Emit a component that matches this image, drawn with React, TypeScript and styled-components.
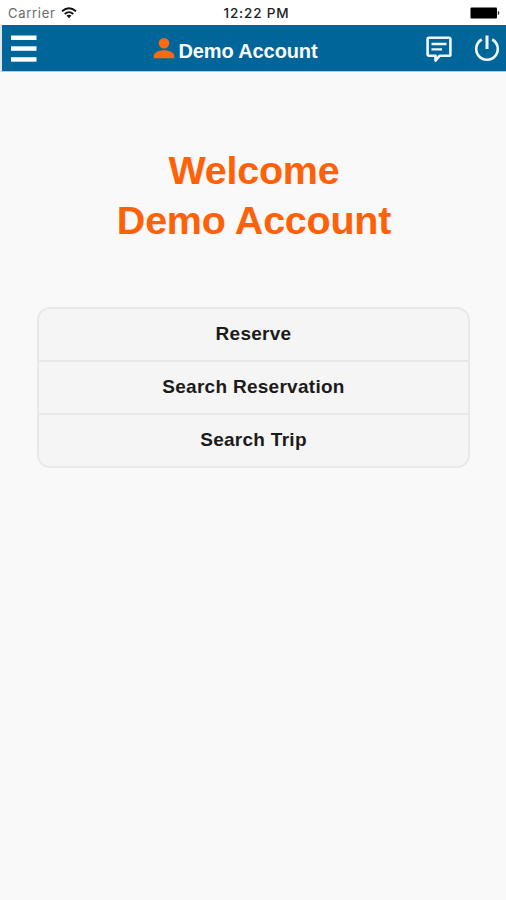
import React from "react";
import styled, { createGlobalStyle } from "styled-components";

const GlobalStyle = createGlobalStyle`
  * { box-sizing: border-box; }
  body { margin: 0; background: #f9f9f9; font-family: "Liberation Sans", Arial, sans-serif; }
`;

const Screen = styled.div`
  display: flex;
  flex-direction: column;
  height: 900px;
  background: #f9f9f9;
`;

const StatusBar = styled.div`
  display: grid;
  grid-template-columns: 1fr auto 1fr;
  align-items: center;
  height: 25px;
  padding: 1px 6px 0 8px;
  background: #fff;
  font-family: Inter, sans-serif;
  font-size: 13px;
  color: #222;
`;

const Carrier = styled.div`
  display: flex;
  align-items: center;
  gap: 5px;
  color: #6a6a6a;
  letter-spacing: 0.7px;
`;

const Clock = styled.span`
  font-weight: 500;
  font-size: 13.5px;
  letter-spacing: 0.85px;
  margin-left: 5px;
`;

const Battery = styled.svg`
  justify-self: end;
`;

const Header = styled.header`
  display: grid;
  grid-template-columns: 59px 1fr 98px;
  align-items: center;
  height: 47px;
  padding: 0 6px 0 7px;
  background: #006699;
  border-left: 2px solid #dfe6ee;
  border-bottom: 1px solid #b5c9d9;
`;

const IconButton = styled.button`
  display: flex;
  padding: 0;
  border: 0;
  background: none;
  color: #f1f8ff;
`;

const Title = styled.div`
  display: flex;
  align-items: center;
  justify-content: center;
  gap: 4px;
  color: #f8fbff;
  font-size: 20px;
  font-weight: bold;
  line-height: 24px;
`;

const TitleText = styled.span`
  padding-top: 5px;
  letter-spacing: -0.12px;
`;

const Actions = styled.div`
  display: flex;
  align-items: center;
  justify-content: flex-end;
  gap: 21px;
`;

const Welcome = styled.h1`
  margin: 73px 0 0;
  padding-left: 2px;
  text-align: center;
  color: #ff6108;
  font-size: 39.5px;
  line-height: 50px;
  letter-spacing: -0.25px;
`;

const Menu = styled.nav`
  display: flex;
  flex-direction: column;
  margin: 62px 36px 0 37px;
  border: 2px solid #e8e8e8;
  border-radius: 13px;
  background: #f5f5f5;
  overflow: hidden;
`;

const MenuItem = styled.button`
  height: 53px;
  padding: 0 0 1px;
  border: 0;
  background: none;
  color: #1b1b1b;
  font: bold 19px "Liberation Sans", Arial, sans-serif;
  letter-spacing: 0.28px;

  &:first-child { height: 51px; }
  & + & { border-top: 2px solid #e8e8e8; }
`;

const items = ["Reserve", "Search Reservation", "Search Trip"];

export default function App() {
  return (
    <Screen>
      <GlobalStyle />
      <StatusBar>
        <Carrier>
          Carrier
          <svg width="16" height="12" viewBox="0 0 16 12" fill="none" stroke="#111" strokeWidth="1.8">
            <path d="M1 4.2Q8 -1.8 15 4.2M3.7 7Q8 3.2 12.3 7" />
            <path d="M5.5 8.6Q8 6.7 10.5 8.6L8 11.2Z" fill="#111" stroke="none" />
          </svg>
        </Carrier>
        <Clock>12:22 PM</Clock>
        <Battery width="30" height="12" viewBox="0 0 30 12">
          <rect x="0.5" y="0.5" width="26.5" height="11" rx="1" fill="#000" />
          <path d="M28.3 4.3Q29.8 6 28.3 7.7Z" fill="#111" stroke="#111" strokeWidth=".6" />
        </Battery>
      </StatusBar>
      <Header>
        <IconButton aria-label="Menu">
          <svg width="29" height="30" viewBox="0 0 29 30" fill="#fbfdff">
            <rect x="2" y="2.5" width="25.5" height="4.5" />
            <rect x="2" y="13.3" width="25.5" height="4.5" />
            <rect x="2" y="24.2" width="25.5" height="4.5" />
          </svg>
        </IconButton>
        <Title>
          <svg width="22" height="22" viewBox="0 0 22 22" fill="#fa6a12">
            <circle cx="11" cy="6.3" r="5.3" />
            <path d="M.7 21.3V19C.7 15.3 6.5 13.2 11 13.2S21.3 15.3 21.3 19V21.3Z" />
          </svg>
          <TitleText>Demo Account</TitleText>
        </Title>
        <Actions>
          <IconButton aria-label="Messages">
            <svg width="28" height="28" viewBox="0 0 28 28" fill="none" stroke="currentColor" strokeWidth="2.6">
              <path d="M4 3.8H24Q25.4 3.8 25.4 5.2V20.4Q25.4 21.8 24 21.8H14.5L10.5 26.6V21.8H4Q2.6 21.8 2.6 20.4V5.2Q2.6 3.8 4 3.8Z" strokeLinejoin="round" />
              <path d="M6.5 10H21.5M6.5 15.4H17" strokeWidth="2.4" />
            </svg>
          </IconButton>
          <IconButton aria-label="Log out">
            <svg width="26" height="28" viewBox="0 0 26 28" fill="none" stroke="currentColor" strokeWidth="2.6">
              <path d="M7.8 5.5A10.8 10.8 0 1 0 18.2 5.5" />
              <path d="M13 1.5V15" strokeWidth="3" />
            </svg>
          </IconButton>
        </Actions>
      </Header>
      <Welcome>
        Welcome
        <br />
        Demo Account
      </Welcome>
      <Menu>
        {items.map((item) => (
          <MenuItem key={item}>{item}</MenuItem>
        ))}
      </Menu>
    </Screen>
  );
}
